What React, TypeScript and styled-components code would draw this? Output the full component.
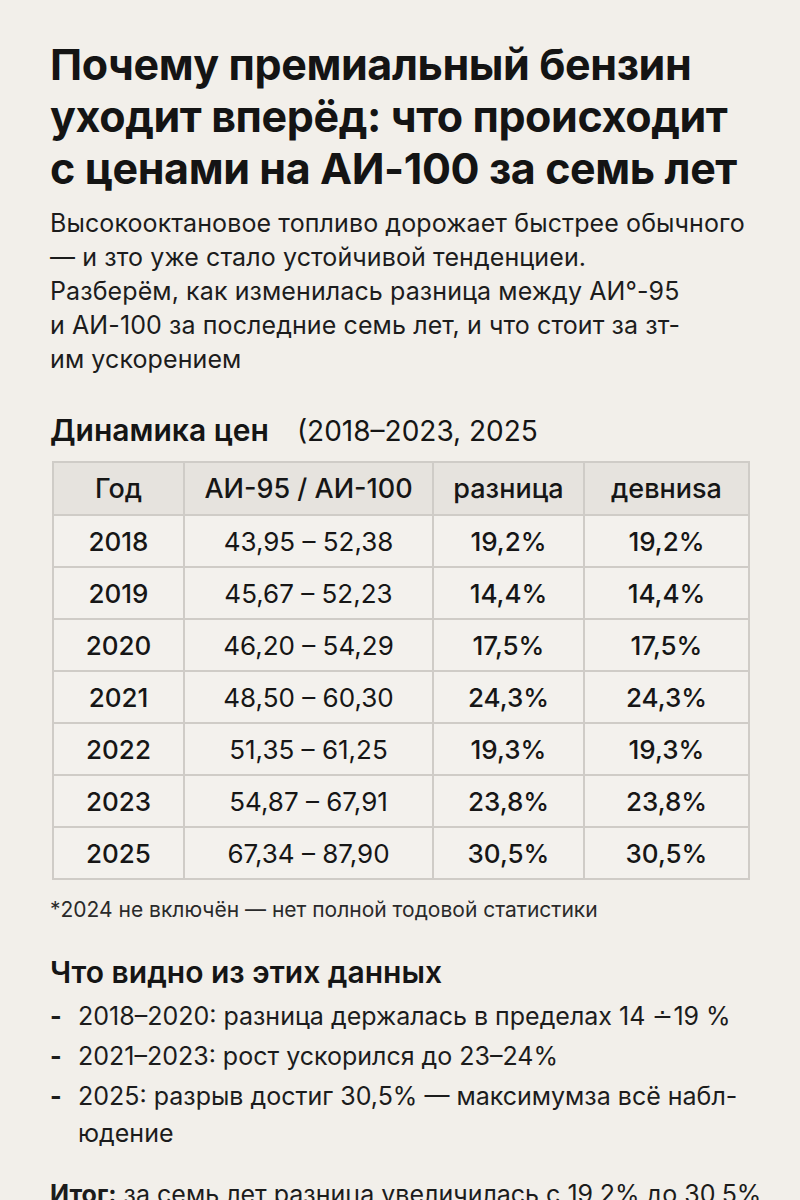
import React from "react";
import styled, { createGlobalStyle } from "styled-components";

const Global = createGlobalStyle`
  html, body { margin: 0; padding: 0; background: #f2efea; }
  body { font-family: Inter, "Noto Sans", sans-serif; color: #161616; }
`;

const Page = styled.main`
  width: 800px;
  height: 1200px;
  overflow: hidden;
  box-sizing: border-box;
  padding: 38px 40px 0 50px;
  background: #f2efea;
`;

const Title = styled.h1`
  margin: 0;
  font-size: 43px;
  line-height: 52px;
  font-weight: 700;
  letter-spacing: -0.4px;
  color: #141414;
  white-space: nowrap;
`;

const Lead = styled.p`
  margin: 12px 0 0;
  font-size: 25px;
  line-height: 34px;
  font-weight: 400;
  letter-spacing: 0.1px;
  color: #1c1c1c;
  white-space: nowrap;
`;

const SectionHead = styled.h2<{ $top: number }>`
  margin: ${(p) => p.$top}px 0 0;
  font-size: 30px;
  line-height: 36px;
  font-weight: 600;
  color: #151515;
  display: flex;
  align-items: baseline;
  gap: 28px;
`;

const Light = styled.span`
  font-weight: 400;
  font-size: 28px;
`;

const Table = styled.table`
  margin: 12px 0 0 2px;
  width: 696px;
  border-collapse: collapse;
  table-layout: fixed;
`;

const Col = styled.col<{ $w: number }>`
  width: ${(p) => p.$w}px;
`;

const Th = styled.th`
  box-sizing: border-box;
  padding: 0;
  height: 53px;
  background: #e6e3de;
  border: 2px solid #cfccc7;
  font-size: 27px;
  font-weight: 500;
  text-align: center;
  color: #161616;
`;

const Td = styled.td<{ $strong?: boolean }>`
  box-sizing: border-box;
  padding: 0;
  height: 52px;
  border: 2px solid #cfccc7;
  background: #f3f1ed;
  font-size: 26px;
  font-weight: ${(p) => (p.$strong ? 500 : 400)};
  text-align: center;
  color: #161616;
  white-space: nowrap;
`;

const Note = styled.p`
  margin: 17px 0 0;
  font-size: 21px;
  line-height: 26px;
  color: #2a2a2a;
`;

const List = styled.ul`
  margin: 8px 0 0;
  padding: 0;
  list-style: none;
  display: flex;
  flex-direction: column;
  gap: 3px;
`;

const Item = styled.li`
  display: flex;
  gap: 16px;
  font-size: 25px;
  line-height: 37px;
  color: #1c1c1c;
  white-space: nowrap;
`;

const Dash = styled.span`
  width: 12px;
  flex: none;
  font-weight: 700;
`;

const Summary = styled.p`
  margin: 25px 0 0;
  font-size: 25px;
  line-height: 34px;
  color: #1c1c1c;
  white-space: nowrap;
`;

const rows = [
  ["2018", "43,95 – 52,38", "19,2%", "19,2%"],
  ["2019", "45,67 – 52,23", "14,4%", "14,4%"],
  ["2020", "46,20 – 54,29", "17,5%", "17,5%"],
  ["2021", "48,50 – 60,30", "24,3%", "24,3%"],
  ["2022", "51,35 – 61,25", "19,3%", "19,3%"],
  ["2023", "54,87 – 67,91", "23,8%", "23,8%"],
  ["2025", "67,34 – 87,90", "30,5%", "30,5%"],
];

export default function App() {
  return (
    <>
      <Global />
      <Page>
        <Title>
          Почему премиальный бензин
          <br />
          уходит вперёд: что происходит
          <br />с ценами на АИ-100 за семь лет
        </Title>
        <Lead>
          Высокооктановое топливо дорожает быстрее обычного
          <br />— и зто уже стало устойчивой тенденциеи.
          <br />
          Разберём, как изменилась разница между АИ°-95
          <br />и АИ-100 за последние семь лет, и что стоит за зт-
          <br />
          им ускорением
        </Lead>
        <SectionHead $top={36}>
          Динамика цен <Light>(2018–2023, 2025</Light>
        </SectionHead>
        <Table>
          <colgroup>
            <Col $w={131} />
            <Col $w={249} />
            <Col $w={151} />
            <Col $w={165} />
          </colgroup>
          <thead>
            <tr>
              <Th>Год</Th>
              <Th>АИ-95 / АИ-100</Th>
              <Th>разница</Th>
              <Th>девниsa</Th>
            </tr>
          </thead>
          <tbody>
            {rows.map((r) => (
              <tr key={r[0]}>
                <Td $strong>{r[0]}</Td>
                <Td>{r[1]}</Td>
                <Td $strong>{r[2]}</Td>
                <Td $strong>{r[3]}</Td>
              </tr>
            ))}
          </tbody>
        </Table>
        <Note>*2024 не включён — нет полной тодовой статистики</Note>
        <SectionHead $top={31}>Что видно из этих данных</SectionHead>
        <List>
          <Item>
            <Dash>-</Dash>
            <span>2018–2020: разница держалась в пределах 14 ∸19 %</span>
          </Item>
          <Item>
            <Dash>-</Dash>
            <span>2021–2023: рост ускорился до 23–24%</span>
          </Item>
          <Item>
            <Dash>-</Dash>
            <span>
              2025: разрыв достиг 30,5% — максимумза всё набл-
              <br />
              юдение
            </span>
          </Item>
        </List>
        <Summary>
          <b>Итог:</b> за семь лет разница увеличилась с 19,2% до 30,5%
        </Summary>
      </Page>
    </>
  );
}
